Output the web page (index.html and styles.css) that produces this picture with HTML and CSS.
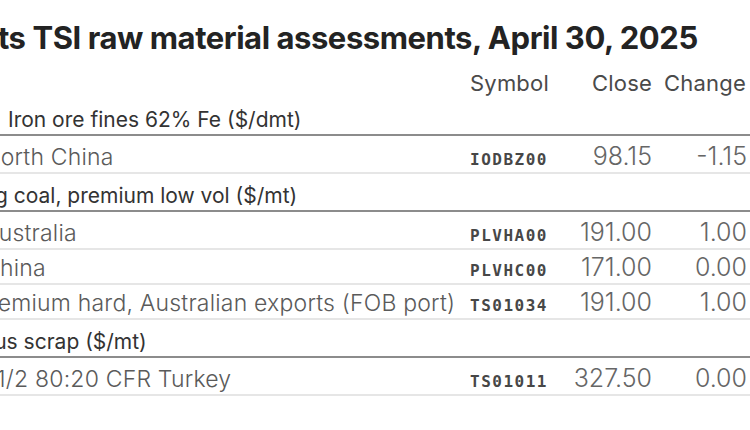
FILE: index.html
```html
<!DOCTYPE html>
<html lang="en">
<head>
<meta charset="utf-8">
<title>Platts TSI raw material assessments</title>
<link rel="stylesheet" href="styles.css">
</head>
<body>
<main class="sheet">
  <h1 class="title"><span class="cut-title">Platts TSI raw material assessments, April 30, 2025</span></h1>
  <table class="grid">
    <colgroup>
      <col class="c-label">
      <col class="c-sym">
      <col class="c-close">
      <col class="c-chg">
    </colgroup>
    <thead>
      <tr class="head">
        <th class="label"></th>
        <th class="sym">Symbol</th>
        <th class="num">Close</th>
        <th class="num">Change</th>
      </tr>
    </thead>
    <tbody>
      <tr class="group">
        <td class="label" colspan="4"><span class="ind-iron">Iron ore fines 62% Fe ($/dmt)</span></td>
      </tr>
      <tr class="item">
        <td class="label"><span class="cut-n">North China</span></td>
        <td class="sym">IODBZ00</td>
        <td class="num">98.15</td>
        <td class="num">-1.15</td>
      </tr>
      <tr class="group">
        <td class="label" colspan="4"><span class="cut-coal">Coking coal, premium low vol ($/mt)</span></td>
      </tr>
      <tr class="item">
        <td class="label"><span class="cut-a">Australia</span></td>
        <td class="sym">PLVHA00</td>
        <td class="num">191.00</td>
        <td class="num">1.00</td>
      </tr>
      <tr class="item compact">
        <td class="label"><span class="cut-c">China</span></td>
        <td class="sym">PLVHC00</td>
        <td class="num">171.00</td>
        <td class="num">0.00</td>
      </tr>
      <tr class="item compact">
        <td class="label"><span class="cut-pr">Premium hard, Australian exports (FOB port)</span></td>
        <td class="sym">TS01034</td>
        <td class="num">191.00</td>
        <td class="num">1.00</td>
      </tr>
      <tr class="group">
        <td class="label" colspan="4"><span class="cut-fe">Ferrous scrap ($/mt)</span></td>
      </tr>
      <tr class="item">
        <td class="label"><span class="cut-hms">HMS 1/2 80:20 CFR Turkey</span></td>
        <td class="sym">TS01011</td>
        <td class="num">327.50</td>
        <td class="num">0.00</td>
      </tr>
    </tbody>
  </table>
</main>
</body>
</html>
```

FILE: styles.css
```css
html, body {
  margin: 0;
  padding: 0;
  background: #ffffff;
}

body {
  width: 750px;
  height: 430px;
  overflow: hidden;
  font-family: Inter, "Noto Sans", "Liberation Sans", sans-serif;
}

.sheet {
  padding-top: 18px;
}

.title {
  margin: 0;
  font-size: 31px;
  line-height: 40px;
  font-weight: 700;
  color: #232323;
  letter-spacing: -0.45px;
  white-space: nowrap;
}

.cut-title {
  display: inline-block;
  margin-left: -57px;
}

.grid {
  width: 750px;
  border-collapse: collapse;
  table-layout: fixed;
  margin-top: 8px;
}

.c-label { width: auto; }
.c-sym { width: 110px; }
.c-close { width: 82px; }
.c-chg { width: 98px; }

.grid th,
.grid td {
  box-sizing: border-box;
  padding: 0;
  white-space: nowrap;
  overflow: hidden;
  vertical-align: bottom;
  line-height: 1;
}

.head th {
  height: 31px;
  padding-bottom: 3px;
  font-size: 22px;
  font-weight: 400;
  color: #4a4a4a;
  text-align: left;
  letter-spacing: 0.2px;
}

.head th.num { text-align: right; }
.head th.sym { padding-left: 10px; }

.group td {
  height: 38px;
  padding-bottom: 4px;
  border-bottom: 2px solid #8c8c8c;
  font-size: 21px;
  font-weight: 400;
  color: #333333;
}

.item td {
  height: 38px;
  padding-bottom: 3px;
  border-bottom: 2px solid #e6e6e6;
  font-size: 23px;
  font-weight: 300;
  letter-spacing: 0.2px;
  color: #5a5a5a;
}

.item.compact td {
  height: 35px;
}

.item td.sym {
  padding-left: 10px;
  padding-bottom: 4px;
  font-family: "DejaVu Sans Mono", "Liberation Mono", monospace;
  font-size: 16px;
  font-weight: 700;
  letter-spacing: 1.5px;
  color: #474747;
}

.item td.num {
  text-align: right;
  padding-right: 0;
  font-size: 25px;
  letter-spacing: 0;
  color: #666666;
}

.item td.num:last-child { padding-right: 3px; }
.head th.num:last-child { padding-right: 4px; }

.ind-iron { display: inline-block; margin-left: 8px; }
.cut-n { display: inline-block; margin-left: -17px; }
.cut-coal { display: inline-block; margin-left: -62px; }
.cut-a { display: inline-block; margin-left: -17px; }
.cut-c { display: inline-block; margin-left: -17px; }
.cut-pr { display: inline-block; margin-left: -25px; }
.cut-fe { display: inline-block; margin-left: -58px; }
.cut-hms { display: inline-block; margin-left: -63px; }
```
